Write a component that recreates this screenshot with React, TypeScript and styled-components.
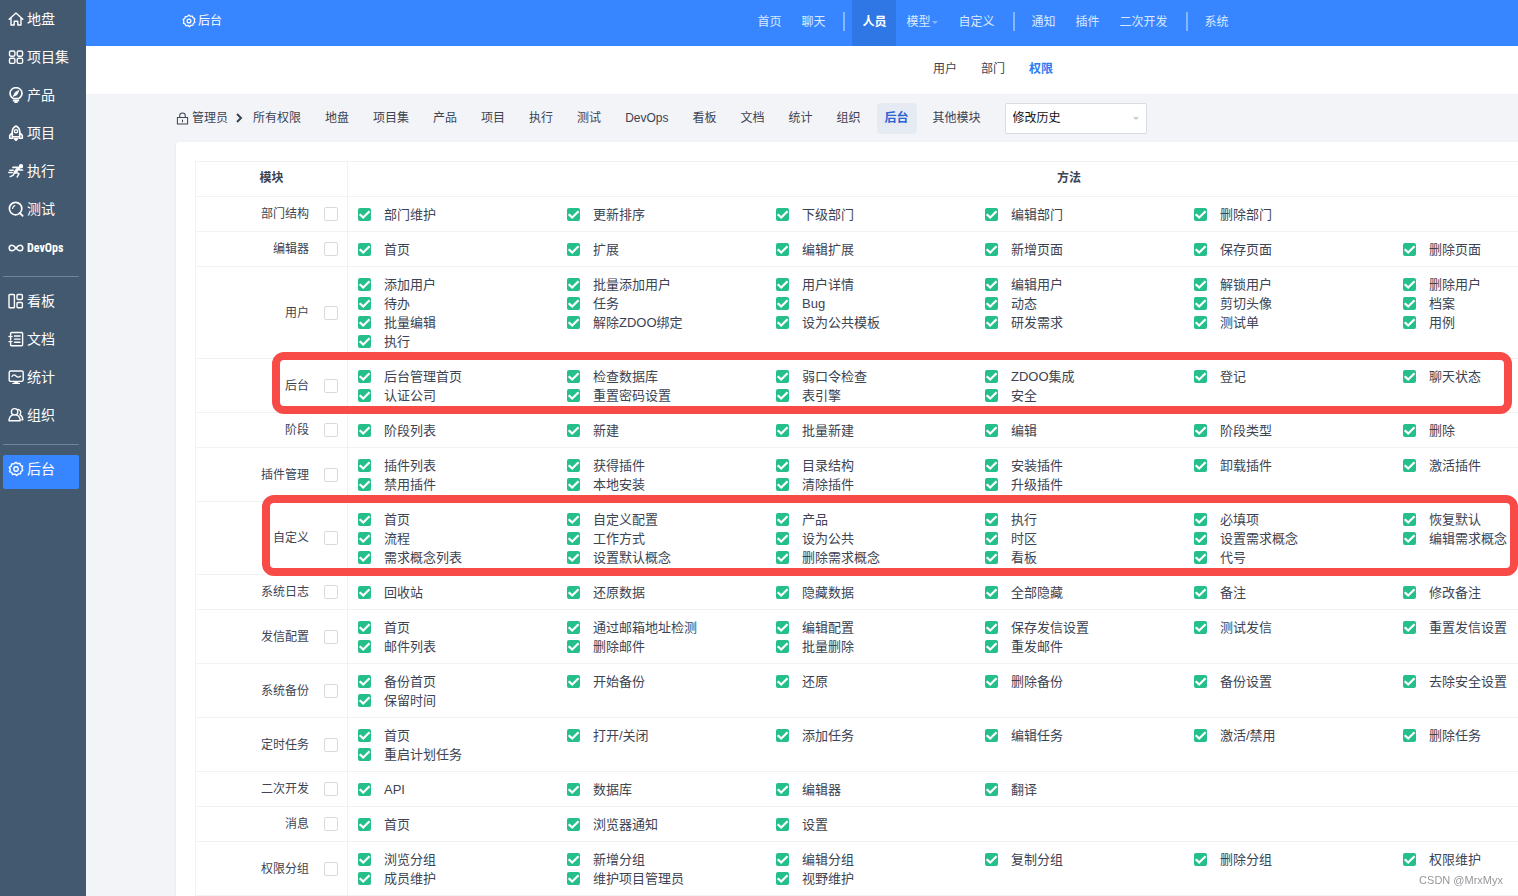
import React from "react";
import styled, { createGlobalStyle, css } from "styled-components";

const uiFont = `"Liberation Sans", "Noto Sans CJK SC", sans-serif`;

const GlobalStyle = createGlobalStyle`
  *, *::before, *::after { box-sizing: border-box; }
  body {
    margin: 0;
    background: #f3f4f7;
    color: #3c4353;
    font-family: ${uiFont};
    font-size: 12px;
    line-height: 18px;
  }
  a { color: inherit; text-decoration: none; }
`;

const Shell = styled.div`
  display: flex;
  height: 100vh;
  overflow: auto;
  scrollbar-width: none;
`;

/* ---------- sidebar ---------- */

const Sidebar = styled.nav`
  position: sticky;
  top: 0;
  left: 0;
  z-index: 3;
  flex: 0 0 86px;
  min-width: 0;
  height: 100vh;
  padding: 5px 7px 0 3px;
  background: #43596f;
`;

const SideLink = styled.a<{ $active?: boolean; $narrow?: boolean }>`
  display: flex;
  align-items: center;
  gap: 3px;
  height: 34px;
  margin-bottom: 4px;
  padding: 0 0 6px 5px;
  border-radius: 2px;
  color: #fff;
  font-size: 14px;
  white-space: nowrap;
  ${(p) => p.$active && css`background: #3886ff;`}
  ${(p) =>
    p.$narrow &&
    css`
      padding-bottom: 4px;
      font-family: "Roboto Condensed", "Liberation Sans Narrow", Roboto, ${uiFont};
      font-size: 12px;
      font-weight: 700;
    `}
`;

const SideRule = styled.hr`
  margin: 9px 0 10px;
  border: 0;
  height: 1px;
  background: #72859a;
`;

const Icon = styled.svg<{ $size?: number }>`
  flex: none;
  width: ${(p) => p.$size ?? 16}px;
  height: ${(p) => p.$size ?? 16}px;
  fill: none;
  stroke: currentColor;
  stroke-width: 1.4;
  stroke-linecap: round;
  stroke-linejoin: round;
`;

/* ---------- top bars ---------- */

const Main = styled.main`
  flex: 1 0 1814px;
  min-width: 0;
`;

const TopBar = styled.header`
  display: grid;
  grid-template-columns: 1fr auto 1fr;
  align-items: center;
  height: 46px;
  padding: 0 90px;
  background: #3886ff;
  color: #fff;
`;

const Brand = styled.a`
  display: flex;
  align-items: center;
  gap: 2px;
  padding: 0 0 4px 6px;
`;

const TopNav = styled.nav`
  display: flex;
  align-items: center;
  height: 46px;
`;

const TopLink = styled.a<{ $active?: boolean }>`
  display: flex;
  align-items: center;
  gap: 2px;
  height: 46px;
  padding: 0 10px 2px;
  color: ${(p) => (p.$active ? "#fff" : "#dbe9ff")};
  font-weight: ${(p) => (p.$active ? 700 : 400)};
  background: ${(p) => (p.$active ? "#3077e6" : "transparent")};
`;

const TopRule = styled.span`
  width: 2px;
  height: 19px;
  margin: 0 7px 3px 8px;
  background: #86b6ff;
`;

const Caret = styled.span<{ $color: string }>`
  border: solid transparent;
  border-width: 3px 3px 0;
  border-top-color: ${(p) => p.$color};
`;

const SubNav = styled.nav`
  display: flex;
  justify-content: center;
  align-items: center;
  gap: 24px;
  height: 48px;
  padding-bottom: 3px;
  background: #fff;
`;

const SubLink = styled.a<{ $active?: boolean }>`
  color: ${(p) => (p.$active ? "#2e7bf2" : "#3c4353")};
  font-weight: ${(p) => (p.$active ? 700 : 400)};
`;

/* ---------- module filter ---------- */

const FilterBar = styled.div`
  display: flex;
  align-items: center;
  height: 48px;
  padding: 0 90px;
`;

const Group = styled.span`
  display: flex;
  align-items: center;
  gap: 3px;
  margin-right: 5px;
`;

const FilterNav = styled.nav`
  display: flex;
  gap: 8px;
  margin-right: 16px;
`;

const FilterLink = styled.a<{ $active?: boolean }>`
  display: flex;
  align-items: center;
  height: 31px;
  padding: 0 8px;
  border-radius: 4px;
  ${(p) =>
    p.$active &&
    css`
      background: #e5eaf3;
      color: #2b63d0;
      font-weight: 700;
    `}
`;

const SelectBox = styled.div`
  display: grid;
  grid-template-columns: 1fr auto;
  align-items: center;
  width: 142px;
  height: 31px;
  padding-right: 7px;
  border: 1px solid #d9dce2;
  border-radius: 2px;
  background: #fff;
`;

const Select = styled.select`
  appearance: none;
  height: 29px;
  padding: 0 0 0 7px;
  border: 0;
  background: transparent;
  color: #111;
  font: inherit;
`;

/* ---------- permission table ---------- */

const Card = styled.section`
  margin: 0 90px 19px;
  padding: 19px;
  border-radius: 4px;
  background: #fff;
  box-shadow: 0 1px 3px rgba(60, 70, 90, 0.08);
`;

const Table = styled.table`
  width: 100%;
  border-spacing: 0;
  table-layout: fixed;
  border: solid #f1f2f4;
  border-width: 1px 0 0 1px;
`;

const HeadCell = styled.th<{ $narrow?: boolean }>`
  width: ${(p) => (p.$narrow ? "152px" : "auto")};
  height: 35px;
  padding: 0 0 2px;
  border: solid #f1f2f4;
  border-width: 0 1px 1px 0;
  font-weight: 700;
`;

const ModuleCell = styled.th`
  position: relative;
  padding: 0 9px 0 0;
  border: solid #f1f2f4;
  border-width: 0 1px 1px 0;
  font-weight: 400;
`;

const ModuleLabel = styled.label`
  display: flex;
  justify-content: flex-end;
  align-items: center;
  gap: 15px;
`;

const MethodCell = styled.td`
  padding: 8px 0 7px 10px;
  border: solid #f1f2f4;
  border-width: 0 1px 1px 0;
`;

const MethodGrid = styled.div`
  display: grid;
  grid-template-columns: repeat(6, 209px);
`;

const Method = styled.label`
  display: flex;
  align-items: center;
  gap: 13px;
  font-size: 13px;
  line-height: 19px;
`;

const Check = styled.input.attrs({ type: "checkbox" })`
  appearance: none;
  flex: none;
  width: 14px;
  height: 14px;
  margin: 0;
  border: 1px solid #d8dade;
  border-radius: 2px;
  background: #fff;

  &:checked {
    width: 13px;
    height: 13px;
    border: 0;
    background: #25c08a;
  }

  &:checked::after {
    content: "";
    display: block;
    width: 100%;
    height: 100%;
    background: #fff;
    clip-path: polygon(7% 54%, 19% 42%, 40% 61%, 83% 19%, 95% 31%, 40% 84%);
  }
`;

/* Red marker drawn over a whole table row */
const Marker = styled.span<{ $left: number; $width: number }>`
  position: absolute;
  z-index: 2;
  top: -7px;
  bottom: -2px;
  left: ${(p) => p.$left}px;
  width: ${(p) => p.$width}px;
  border: 8px solid #f84a46;
  border-radius: 12px;
  pointer-events: none;
`;

const Watermark = styled.span`
  position: fixed;
  right: 15px;
  bottom: 7px;
  z-index: 4;
  color: #96989c;
  font-size: 11px;
`;

/* ---------- icons ---------- */

const GearShape = () => (
  <>
    <path d="M8 1.2 9.6 2.7 11.8 2.3 12.6 4.3 14.6 5.3 14 7.4 14.8 9.3 13 10.6 12.5 12.8 10.3 12.9 8.6 14.6 7 13.1 4.7 13.6 3.7 11.6 1.6 10.6 2.2 8.4 1.3 6.4 3.2 5.2 3.7 3 5.9 2.9Z" />
    <circle cx="8" cy="8" r="2.2" />
  </>
);

const icons: Record<string, React.ReactNode> = {
  home: <path d="M1.2 8.2 8 2l6.8 6.2M3 7v7h3.2v-3.8h3.6V14H13V7" />,
  grid: (
    <>
      <rect x="1.5" y="2" width="5.4" height="5.2" rx="1.4" />
      <rect x="9.2" y="2" width="5.4" height="5.2" rx="1.4" />
      <rect x="1.5" y="9.2" width="5.4" height="5.2" rx="1.4" />
      <rect x="9.2" y="9.2" width="5.4" height="5.2" rx="1.4" />
    </>
  ),
  bulb: (
    <>
      <path d="M5.4 11.6C3.4 10.2 2 8.600 2 6.400a6 5.800 0 0 1 12 0c0 2.200-1.400 3.800-3.400 5.200Z" strokeWidth="1.600" />
      <path d="M5.500 13.600h5M7 15.400h2" strokeWidth="1.600" />
      <path d="M10.800 3.800 8.900 7.800 5.200 9.400 7.300 5.400Z" fill="currentColor" strokeWidth=".8" />
    </>
  ),
  rocket: (
    <>
      <path d="M4.300 11.800V6.400C4.300 4 6 2 8 1c2 1 3.700 3 3.700 5.400v5.400ZM4.300 7.500 1.700 10.600v2.600h3M11.700 7.500l2.600 3.100v2.600h-3" strokeWidth="1.600" />
      <circle cx="8" cy="6.200" r="1.600" />
      <path d="M6.200 13.500h3.600L8 15.600Z" fill="currentColor" />
    </>
  ),
  run: (
    <>
      <circle cx="13" cy="3.200" r="1.500" fill="currentColor" />
      <path d="M5 4.400h4.500l2 2.600h3" strokeWidth="1.700" />
      <path d="M10.500 5.200 7 9.200" strokeWidth="3" />
      <path d="M7.500 9.200 11 10.600 9.200 14M6.500 9.800 5 12.400 2.200 13.600M1.800 7.200h3.400M.8 9.600h3.400" strokeWidth="1.500" />
    </>
  ),
  search: (
    <>
      <circle cx="7.600" cy="7.600" r="6.200" strokeWidth="1.700" />
      <path d="M11.800 12 14.600 14.800" strokeWidth="1.900" />
      <path d="M4.600 7.400A3 3 0 0 1 6.800 4.600" strokeWidth="1.200" />
    </>
  ),
  infinity: (
    <path d="M8 8C6.600 6.300 5.600 5.200 4 5.200a2.800 2.800 0 0 0 0 5.600C5.600 10.800 6.600 9.700 8 8s2.400-2.800 4-2.800a2.800 2.800 0 0 1 0 5.600C10.400 10.800 9.400 9.700 8 8Z" strokeWidth="1.500" />
  ),
  board: (
    <>
      <rect x="1" y="1.500" width="5.400" height="13.200" rx=".8" />
      <rect x="9" y="1.500" width="5.400" height="5" rx="1" />
      <rect x="9" y="9.500" width="5.400" height="5.200" rx="1" />
    </>
  ),
  doc: (
    <>
      <path d="M2.600 4V2.500a1 1 0 0 1 1-1h10a1 1 0 0 1 1 1v11.200a1 1 0 0 1-1 1h-10a1 1 0 0 1-1-1V12M2.600 7v2M1 5.500h3M1 10.600h3" />
      <path d="M6.500 5h5.500M6.500 8.100h5.500M6.500 11.200h5.500" />
    </>
  ),
  stats: (
    <>
      <rect x="1.200" y="2" width="14" height="10.400" rx="1.600" />
      <path d="M4 7.500C5.200 5.200 6.600 5.600 8 7s3 1.600 4.400.2" />
      <path d="M5 14.400h6.400M7 13.200h2.400" />
    </>
  ),
  people: (
    <>
      <circle cx="6.600" cy="4.800" r="3.200" />
      <path d="M4.800 7.800C2.400 8.800 1 11 1 13.800h11.200c0-2.800-1.400-5-3.800-6M10 2.400a3 3 0 0 1 1.800 5.200c1.800 1 3 2.800 3 5.200h-1" />
    </>
  ),
  gear: <GearShape />,
};

type SideItem = { icon: string; text: string; active?: boolean; narrow?: boolean };

const sideGroups: SideItem[][] = [
  [
    { icon: "home", text: "地盘" },
    { icon: "grid", text: "项目集" },
    { icon: "bulb", text: "产品" },
    { icon: "rocket", text: "项目" },
    { icon: "run", text: "执行" },
    { icon: "search", text: "测试" },
    { icon: "infinity", text: "DevOps", narrow: true },
  ],
  [
    { icon: "board", text: "看板" },
    { icon: "doc", text: "文档" },
    { icon: "stats", text: "统计" },
    { icon: "people", text: "组织" },
  ],
  [{ icon: "gear", text: "后台", active: true }],
];

const topGroups = [
  ["首页", "聊天"],
  ["人员", "模型", "自定义"],
  ["通知", "插件", "二次开发"],
  ["系统"],
];

const filters = [
  "所有权限", "地盘", "项目集", "产品", "项目", "执行", "测试", "DevOps",
  "看板", "文档", "统计", "组织", "后台", "其他模块",
];

type Row = { module: string; methods: string[]; marker?: { left: number; width: number } };

const rows: Row[] = [
  { module: "部门结构", methods: ["部门维护", "更新排序", "下级部门", "编辑部门", "删除部门"] },
  { module: "编辑器", methods: ["首页", "扩展", "编辑扩展", "新增页面", "保存页面", "删除页面"] },
  {
    module: "用户",
    methods: [
      "添加用户", "批量添加用户", "用户详情", "编辑用户", "解锁用户", "删除用户",
      "待办", "任务", "Bug", "动态", "剪切头像", "档案",
      "批量编辑", "解除ZDOO绑定", "设为公共模板", "研发需求", "测试单", "用例",
      "执行",
    ],
  },
  {
    module: "后台",
    marker: { left: 76, width: 1240 },
    methods: [
      "后台管理首页", "检查数据库", "弱口令检查", "ZDOO集成", "登记", "聊天状态",
      "认证公司", "重置密码设置", "表引擎", "安全",
    ],
  },
  { module: "阶段", methods: ["阶段列表", "新建", "批量新建", "编辑", "阶段类型", "删除"] },
  {
    module: "插件管理",
    methods: [
      "插件列表", "获得插件", "目录结构", "安装插件", "卸载插件", "激活插件",
      "禁用插件", "本地安装", "清除插件", "升级插件",
    ],
  },
  {
    module: "自定义",
    marker: { left: 66, width: 1256 },
    methods: [
      "首页", "自定义配置", "产品", "执行", "必填项", "恢复默认",
      "流程", "工作方式", "设为公共", "时区", "设置需求概念", "编辑需求概念",
      "需求概念列表", "设置默认概念", "删除需求概念", "看板", "代号",
    ],
  },
  { module: "系统日志", methods: ["回收站", "还原数据", "隐藏数据", "全部隐藏", "备注", "修改备注"] },
  {
    module: "发信配置",
    methods: [
      "首页", "通过邮箱地址检测", "编辑配置", "保存发信设置", "测试发信", "重置发信设置",
      "邮件列表", "删除邮件", "批量删除", "重发邮件",
    ],
  },
  {
    module: "系统备份",
    methods: ["备份首页", "开始备份", "还原", "删除备份", "备份设置", "去除安全设置", "保留时间"],
  },
  {
    module: "定时任务",
    methods: ["首页", "打开/关闭", "添加任务", "编辑任务", "激活/禁用", "删除任务", "重启计划任务"],
  },
  { module: "二次开发", methods: ["API", "数据库", "编辑器", "翻译"] },
  { module: "消息", methods: ["首页", "浏览器通知", "设置"] },
  {
    module: "权限分组",
    methods: [
      "浏览分组", "新增分组", "编辑分组", "复制分组", "删除分组", "权限维护",
      "成员维护", "维护项目管理员", "视野维护",
    ],
  },
];

export default function App() {
  return (
    <>
      <GlobalStyle />
      <Shell>
        <Sidebar>
          {sideGroups.map((group, i) => (
            <React.Fragment key={i}>
              {i > 0 && <SideRule />}
              {group.map((item) => (
                <SideLink key={item.text} href="#" $active={item.active} $narrow={item.narrow}>
                  <Icon viewBox="0 0 16 16" aria-hidden="true">{icons[item.icon]}</Icon>
                  {item.text}
                </SideLink>
              ))}
            </React.Fragment>
          ))}
        </Sidebar>

        <Main>
          <TopBar>
            <Brand href="#">
              <Icon viewBox="0 0 16 16" $size={14} aria-hidden="true">{icons.gear}</Icon>
              后台
            </Brand>
            <TopNav>
              {topGroups.map((group, i) => (
                <React.Fragment key={i}>
                  {i > 0 && <TopRule />}
                  {group.map((text) => (
                    <TopLink key={text} href="#" $active={text === "人员"}>
                      {text}
                      {text === "模型" && <Caret $color="#86b6ff" />}
                    </TopLink>
                  ))}
                </React.Fragment>
              ))}
            </TopNav>
          </TopBar>

          <SubNav>
            <SubLink href="#">用户</SubLink>
            <SubLink href="#">部门</SubLink>
            <SubLink href="#" $active>权限</SubLink>
          </SubNav>

          <FilterBar>
            <Group>
              <Icon viewBox="0 0 14 14" $size={13} aria-hidden="true">
                <path d="M1.500 6h11v7h-11ZM4 6V4a3 3 0 0 1 6 0v2M7 8.500v2" strokeWidth="1.100" />
              </Icon>
              管理员
            </Group>
            <Icon viewBox="0 0 12 12" $size={12} aria-hidden="true">
              <path d="M4 2 8 6l-4 4" strokeWidth="2" strokeLinecap="butt" strokeLinejoin="miter" />
            </Icon>
            <FilterNav>
              {filters.map((text) => (
                <FilterLink key={text} href="#" $active={text === "后台"}>{text}</FilterLink>
              ))}
            </FilterNav>
            <SelectBox>
              <Select aria-label="版本" defaultValue="history">
                <option value="history">修改历史</option>
              </Select>
              <Caret $color="#c8ccd3" />
            </SelectBox>
          </FilterBar>

          <Card>
            <Table>
              <thead>
                <tr>
                  <HeadCell $narrow scope="col">模块</HeadCell>
                  <HeadCell scope="col">方法</HeadCell>
                </tr>
              </thead>
              <tbody>
                {rows.map((row) => (
                  <tr key={row.module}>
                    <ModuleCell scope="row">
                      <ModuleLabel>
                        {row.module}
                        <Check />
                      </ModuleLabel>
                      {row.marker && <Marker $left={row.marker.left} $width={row.marker.width} />}
                    </ModuleCell>
                    <MethodCell>
                      <MethodGrid>
                        {row.methods.map((name) => (
                          <Method key={name}>
                            <Check defaultChecked />
                            {name}
                          </Method>
                        ))}
                      </MethodGrid>
                    </MethodCell>
                  </tr>
                ))}
              </tbody>
            </Table>
          </Card>
        </Main>
      </Shell>
      <Watermark>CSDN @MrxMyx</Watermark>
    </>
  );
}
